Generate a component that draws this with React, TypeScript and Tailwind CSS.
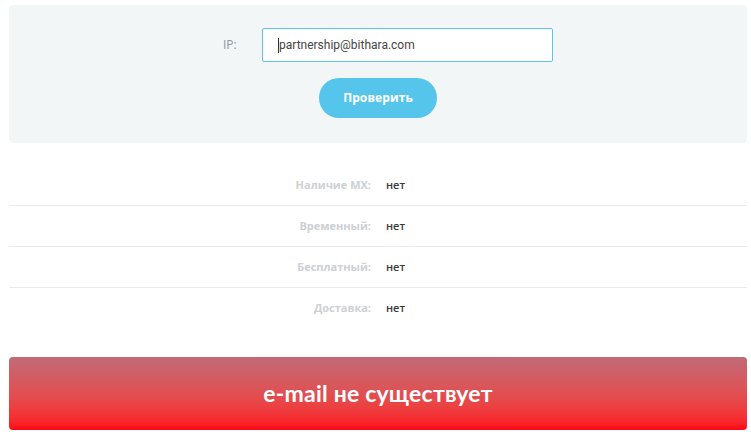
import React from 'react';

interface CheckRow {
    label: string;
    value: string;
}

const rows: CheckRow[] = [
    { label: "Наличие MX:", value: "нет" },
    { label: "Временный:", value: "нет" },
    { label: "Бесплатный:", value: "нет" },
    { label: "Доставка:", value: "нет" },
];

const App: React.FC = () => {
    return (
        <div className="w-[751px] h-[440px] bg-white pl-[9px] pr-[4px] pt-[5px] overflow-hidden" style={{ fontFamily: "'Open Sans', 'Liberation Sans', sans-serif" }}>
            {/* форма проверки */}
            <div className="h-[138px] bg-[#f2f6f7] rounded-[4px] flex flex-col items-center pt-[23px]">
                <div className="flex items-center ml-[20px]">
                    <label className="text-[12px] text-[#8f979c] w-[39px]">IP:</label>
                    <div className="w-[291px] h-[34px] bg-white border border-[#5cc5ea] rounded-[2px] flex items-center pl-[15px] text-[12px] text-[#444]" style={{ fontFamily: "Roboto, 'Liberation Sans', sans-serif" }}>
                        <span className="w-px h-[15px] bg-[#333]"></span>
                        partnership@bithara.com
                    </div>
                </div>
                <button className="mt-[16px] w-[118px] h-[40px] rounded-full bg-[#56c5ec] text-white text-[12px] font-bold tracking-[0.1px]">
                    Проверить
                </button>
            </div>

            {/* результаты */}
            <div className="mt-[22px]">
                {rows.map((row, i) => (
                    <div key={i} className={`h-[41px] flex items-center ${i < rows.length - 1 ? 'border-b border-[#ebebeb]' : ''}`}>
                        <div className="w-[362px] text-right text-[11px] font-bold text-[#cdd0d4]">{row.label}</div>
                        <div className="ml-[15px] text-[11px] font-semibold text-[#3a3a3a]">{row.value}</div>
                    </div>
                ))}
            </div>

            <div className="mt-[28px] h-[73px] rounded-[4px] bg-gradient-to-b from-[#bf6a77] to-[#ff0015] flex items-center justify-center">
                <span className="text-white text-[23px] font-bold tracking-[0.2px]" style={{ fontFamily: "Lato, 'Liberation Sans', sans-serif" }}>e-mail не существует</span>
            </div>
        </div>
    );
};

export default App;
